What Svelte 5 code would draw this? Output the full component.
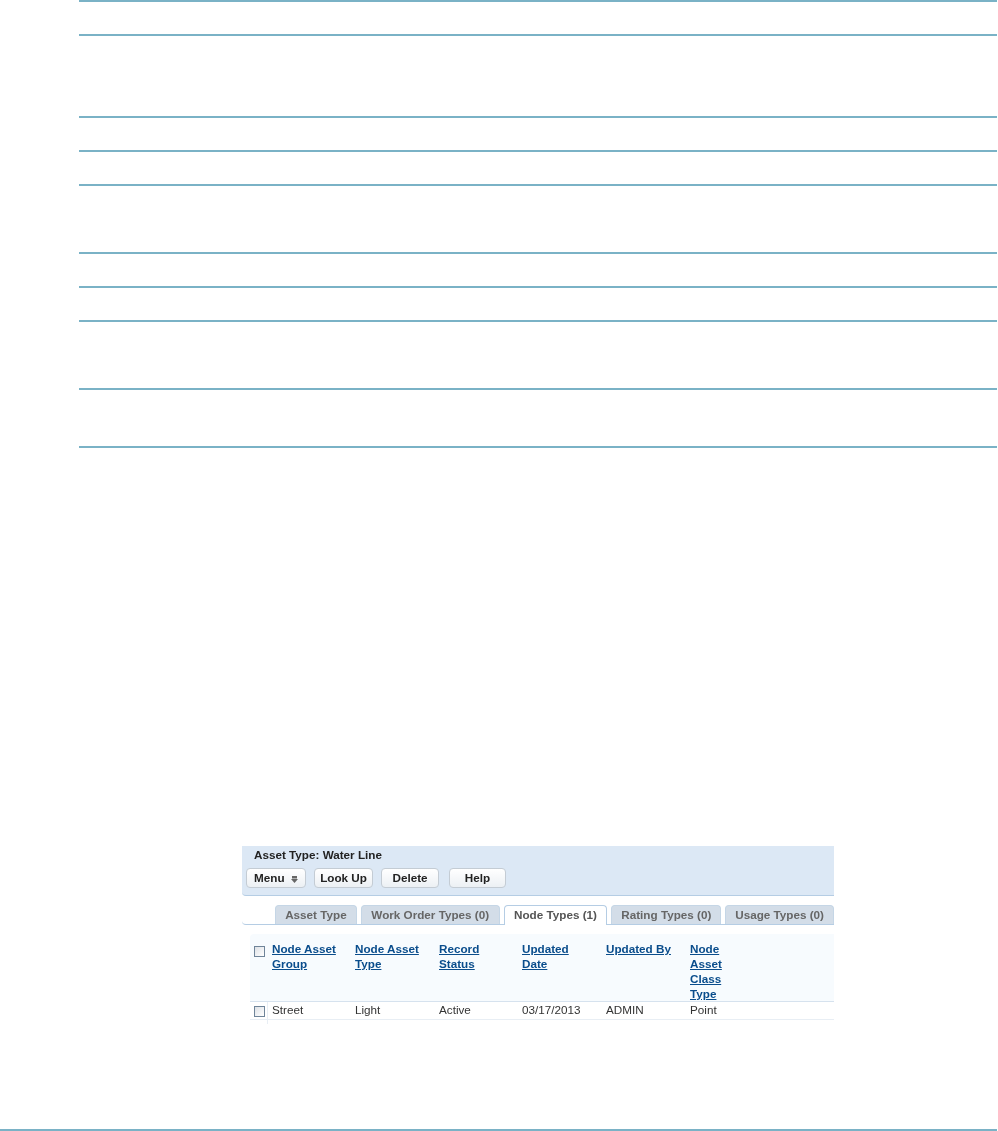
<script>
  const rowHeights = [2, 34, 82, 34, 34, 68, 34, 34, 68, 58];
  const tabs = [
    { label: 'Asset Type', width: 82 },
    { label: 'Work Order Types (0)', width: 139 },
    { label: 'Node Types (1)', width: 104, active: true },
    { label: 'Rating Types (0)', width: 110 },
    { label: 'Usage Types (0)', width: 109 }
  ];
  const buttons = [
    { label: 'Menu', width: 60, menu: true },
    { label: 'Look Up', width: 59 },
    { label: 'Delete', width: 58 },
    { label: 'Help', width: 57, wide: true }
  ];
  const columns = [
    { lines: ['Node Asset', 'Group'], value: 'Street', width: 83 },
    { lines: ['Node Asset', 'Type'], value: 'Light', width: 84 },
    { lines: ['Record', 'Status'], value: 'Active', width: 83 },
    { lines: ['Updated', 'Date'], value: '03/17/2013', width: 84 },
    { lines: ['Updated By'], value: 'ADMIN', width: 84 },
    { lines: ['Node', 'Asset', 'Class', 'Type'], value: 'Point', width: 60 }
  ];
</script>

<div class="page">
  <div class="rules">
    {#each rowHeights as h}
      <div class="rule" style="height: {h}px"></div>
    {/each}
  </div>

  <figure class="shot">
    <div class="head">
      <div class="title">Asset Type: Water Line</div>
      <div class="buttons">
        {#each buttons as b}
          <button class:wide={b.wide} style="width: {b.width}px">
            {b.label}
            {#if b.menu}
              <svg width="7" height="7" viewBox="0 0 7 7" class="caret"><path d="M1 0h5v2.500H1zM0 3h7L3.500 7z" fill="#666"/></svg>
            {/if}
          </button>
        {/each}
      </div>
    </div>

    <div class="tabs">
      {#each tabs as t}
        <div class="tab" class:active={t.active} style="width: {t.width}px">{t.label}</div>
      {/each}
    </div>

    <div class="grid">
      <div class="grid-row header">
        <div class="check"><span class="box"></span></div>
        {#each columns as c}
          <div class="cell" style="width: {c.width}px">
            {#each c.lines as l}
              <div class="link"><span>{l}</span></div>
            {/each}
          </div>
        {/each}
      </div>
      <div class="grid-row body">
        <div class="check"><span class="box"></span></div>
        {#each columns as c}
          <div class="cell" style="width: {c.width}px">{c.value}</div>
        {/each}
      </div>
    </div>
  </figure>

  <div class="footer-rule"></div>
</div>

<style>
  :global(body) {
    margin: 0;
    background: #fff;
  }
  .page {
    width: 998px;
    height: 1131px;
    display: flex;
    flex-direction: column;
    font-family: "Liberation Sans", Arial, sans-serif;
    overflow: hidden;
  }
  .rules {
    margin-left: 79px;
    margin-right: 1px;
  }
  .rule {
    box-sizing: border-box;
    border-bottom: 2px solid #7ab2c6;
  }
  .shot {
    margin: 398px 0 0 242px;
    width: 592px;
    flex: none;
    filter: blur(0.3px);
  }
  .head {
    height: 50px;
    box-sizing: border-box;
    padding: 2px 0 0 4px;
    background: #dce8f5;
    border-bottom: 1px solid #b5cde4;
    border-bottom-left-radius: 4px;
  }
  .title {
    font-size: 11.7px;
    font-weight: bold;
    color: #222;
    line-height: 13px;
    padding-left: 8px;
  }
  .buttons {
    display: flex;
    gap: 8px;
    margin-top: 7px;
  }
  button {
    height: 20px;
    padding: 0 0 2px;
    box-sizing: border-box;
    border: 1px solid #c4ccd4;
    border-radius: 4px;
    background: linear-gradient(#fff, #ecf0f4);
    font: bold 11.7px "Liberation Sans", Arial, sans-serif;
    color: #222;
  }
  button.wide {
    margin-left: 2px;
  }
  .caret {
    margin-left: 3px;
    vertical-align: -1px;
  }
  .tabs {
    display: flex;
    gap: 4px;
    height: 19px;
    margin-top: 9px;
    padding-left: 33px;
    border-bottom: 1px solid #b5cde4;
    border-bottom-left-radius: 4px;
  }
  .tab {
    box-sizing: border-box;
    height: 19px;
    border: 1px solid #c5d6e6;
    border-bottom: none;
    border-radius: 4px 4px 0 0;
    background: #d3dde8;
    color: #666;
    font-size: 11.7px;
    font-weight: bold;
    line-height: 17px;
    text-align: center;
    white-space: nowrap;
  }
  .tab.active {
    height: 20px;
    background: #fff;
    color: #555;
    border-color: #b5cde4;
    position: relative;
  }
  .grid {
    margin-top: 9px;
    margin-left: 8px;
    font-size: 11.7px;
    color: #333;
  }
  .grid-row {
    display: flex;
    box-sizing: border-box;
  }
  .header {
    height: 68px;
    background: #f7fbfe;
    border-bottom: 1px solid #d6e2ee;
    border-top-left-radius: 4px;
    padding-top: 7px;
  }
  .body {
    height: 18px;
    border-bottom: 1px solid #e8eef4;
    line-height: 15px;
  }
  .check {
    width: 18px;
    margin-right: 4px;
    flex: none;
    padding-left: 4px;
    box-sizing: border-box;
  }
  .header .check {
    padding-top: 5px;
  }
  .body .check {
    padding-top: 4px;
    border-right: 1px solid #e8eef4;
    height: 22px;
  }
  .box {
    display: block;
    width: 9px;
    height: 9px;
    border: 1px solid #6f8499;
    background: linear-gradient(135deg, #dde1e6, #fff);
    box-sizing: content-box;
  }
  .cell {
    flex: none;
    white-space: nowrap;
  }
  .link {
    line-height: 15px;
    font-weight: bold;
    color: #0a4d8c;
  }
  .link span {
    text-decoration: underline;
  }
  .footer-rule {
    margin: auto 1px 0 0;
    height: 2px;
    background: #7ab2c6;
  }
</style>
